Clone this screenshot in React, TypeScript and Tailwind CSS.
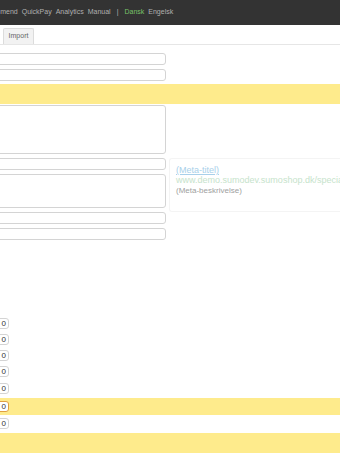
const font = { fontFamily: '"Liberation Sans", Arial, sans-serif' };

const Field = ({ h = 12 }: { h?: number }) => (
  <div
    className="-ml-2 w-[174px] rounded-[3px] border border-[#d4d4d4] bg-white"
    style={{ height: h }}
  />
);

const Num = ({ focus = false }: { focus?: boolean }) => (
  <div
    className={
      "-ml-3 flex h-[11px] w-[21px] items-center justify-end rounded-[3px] border bg-white pr-[2px] text-[8px] leading-none text-[#333] " +
      (focus ? "border-[#e0a040]" : "border-[#d4d4d4]")
    }
  >
    0
  </div>
);

export default function App() {
  return (
    <div className="h-[453px] w-[340px] overflow-hidden bg-white" style={font}>
      {/* top bar */}
      <div className="flex h-[25px] items-center gap-[4px] overflow-hidden bg-[#333333] text-[7px] text-[#b0b0b0]">
        <span className="-ml-[22px]">Recommend</span>
        <span>QuickPay</span>
        <span>Analytics</span>
        <span>Manual</span>
        <span className="px-[2px]">|</span>
        <span className="text-[#78c068]">Dansk</span>
        <span>Engelsk</span>
      </div>

      {/* tabs */}
      <div className="flex h-[20px] items-end border-b border-[#e6e6e6] pl-[3px]">
        <div className="flex h-[16px] w-[31px] items-center justify-center rounded-t-[2px] border border-b-0 border-[#dcdcdc] bg-[#f2f2f2] text-[7px] text-[#666]">
          Import
        </div>
      </div>

      <div className="flex flex-col pt-[8px]">
        <Field />
        <div className="mt-[4px]">
          <Field />
        </div>
        <div className="mt-[3px] h-[20px] bg-[#feeb8c]" />
        <div className="mt-[1px]">
          <Field h={49} />
        </div>

        <div className="mt-[4px] flex">
          <div className="flex flex-col">
            <Field />
            <div className="mt-[4px]">
              <Field h={34} />
            </div>
            <div className="mt-[4px]">
              <Field />
            </div>
            <div className="mt-[4px]">
              <Field />
            </div>
          </div>
          <div className="ml-[3px] h-[54px] min-w-0 flex-1 overflow-hidden rounded-l-[3px] border border-r-0 border-[#f4f4f4] pl-[6px] pt-[7px] leading-none">
            <div className="text-[9px] text-[#a8d0ea] underline">(Meta-titel)</div>
            <div className="mt-[1px] whitespace-nowrap text-[9px] text-[#c6e3cb]">
              www.demo.sumodev.sumoshop.dk/special
            </div>
            <div className="mt-[2px] text-[8px] text-[#a0a0a0]">(Meta-beskrivelse)</div>
          </div>
        </div>

        <div className="mt-[78px] flex flex-col">
          <Num />
          <div className="mt-[5px]"><Num /></div>
          <div className="mt-[5px]"><Num /></div>
          <div className="mt-[5px]"><Num /></div>
          <div className="mt-[6px]"><Num /></div>
          <div className="mt-[4px] flex h-[17px] items-center bg-[#feeb8c]">
            <Num focus />
          </div>
          <div className="mt-[3px]"><Num /></div>
          <div className="mt-[4px] h-[30px] bg-[#feeb8c]" />
        </div>
      </div>
    </div>
  );
}
